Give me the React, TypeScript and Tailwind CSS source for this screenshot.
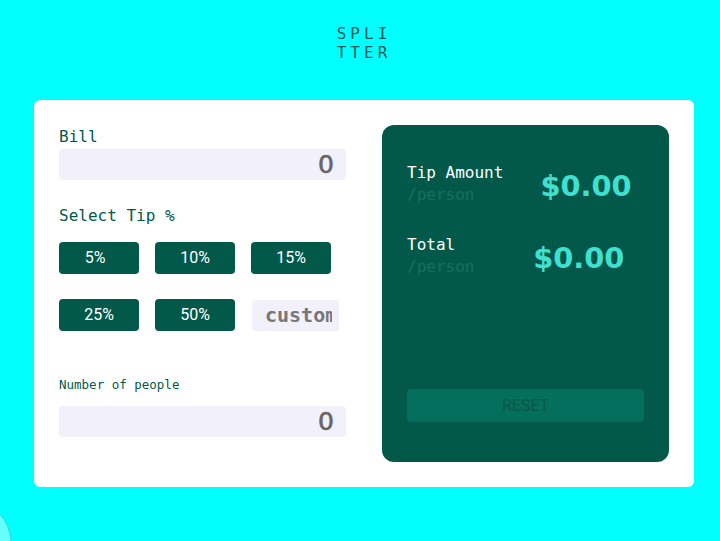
import React from "react";

const mono = "font-['DejaVu_Sans_Mono',monospace]";
const sans = "font-['DejaVu_Sans',sans-serif]";
const roboto = "font-['Roboto',sans-serif]";

function TipButton({ label, extra = "" }: { label: string; extra?: string }) {
  return (
    <button
      className={`w-[80px] h-[32px] rounded-[4px] bg-[#02594a] text-white text-[16px] leading-[32px] ${roboto} ${extra}`}
    >
      {label}
    </button>
  );
}

function ResultRow({ title, className = "" }: { title: string; className?: string }) {
  return (
    <div className={`flex items-center ${className}`}>
      <div className={`flex-auto ${mono} text-[16px] leading-[22px]`}>
        <div className="text-white">{title}</div>
        <div className="text-[#1a6e5d]">/person</div>
      </div>
      <div className={`flex-auto mt-[4px] text-center ${sans} font-bold text-[28.8px] leading-[36px] text-[#40e0d0]`}>
        $0.00
      </div>
    </div>
  );
}

function NumberField() {
  return (
    <div className="flex h-[31px] items-center justify-end rounded-[4px] bg-[#f2f0fa] pr-[12px]">
      <span className={`${sans} text-[25px] leading-none text-[#666666] [-webkit-text-stroke:0.6px_#666666]`}>0</span>
    </div>
  );
}

export default function App() {
  return (
    <div className="relative min-h-[541px] overflow-hidden bg-[#00ffff]">
      <div className="ml-[34px] w-[660px] pt-[24px]">
        <h1
          className={`mx-auto w-[60px] break-all text-center text-[16px] leading-[19px] tracking-[4px] text-[#1f5a52] ${mono}`}
        >
          SPLITTER
        </h1>
        <div className="mt-[38px] grid grid-cols-2 gap-[36px] rounded-[6px] bg-white p-[25px]">
          {/* Left column */}
          <div className={`flex flex-col ${mono}`}>
            <div className="text-[16px] leading-[24px] text-[#02594a]">Bill</div>
            <NumberField />
            <div className="mt-[24px] text-[16px] leading-[24px] text-[#02594a]">Select Tip %</div>
            <div className="mt-[14px] flex flex-wrap items-center gap-x-[16px] gap-y-[25px]">
              <TipButton label="5%" extra="pr-[8px]" />
              <TipButton label="10%" />
              <TipButton label="15%" />
              <TipButton label="25%" />
              <TipButton label="50%" />
              <div className="ml-[1px] h-[31px] w-[87px] rounded-[3px] bg-[#f2f0fa] pl-[13px] pr-[7px]">
                <div className="h-full overflow-hidden whitespace-nowrap text-[20px] font-bold leading-[31px] text-[#777777]">
                  custom
                </div>
              </div>
            </div>
            <div className="mt-[44px] text-[12.5px] leading-[19px] text-[#02594a]">Number of people</div>
            <div className="mt-[12px]">
              <NumberField />
            </div>
          </div>

          {/* Right panel */}
          <div className="flex h-[337px] flex-col rounded-[12px] bg-[#02594a] px-[25px] pt-[37px] pb-[40px]">
            <ResultRow title="Tip Amount" />
            <ResultRow title="Total" className="mt-[28px]" />
            <button
              className={`mt-auto h-[33px] w-full rounded-[4px] bg-[#046f5c] text-[16px] text-[#0b5646] ${roboto}`}
            >
              RESET
            </button>
          </div>
        </div>
      </div>
      <div className="absolute left-[-84px] top-[497px] h-[96px] w-[96px] rounded-full border border-[#2ad6d6] bg-[#66fffc]" />
    </div>
  );
}
